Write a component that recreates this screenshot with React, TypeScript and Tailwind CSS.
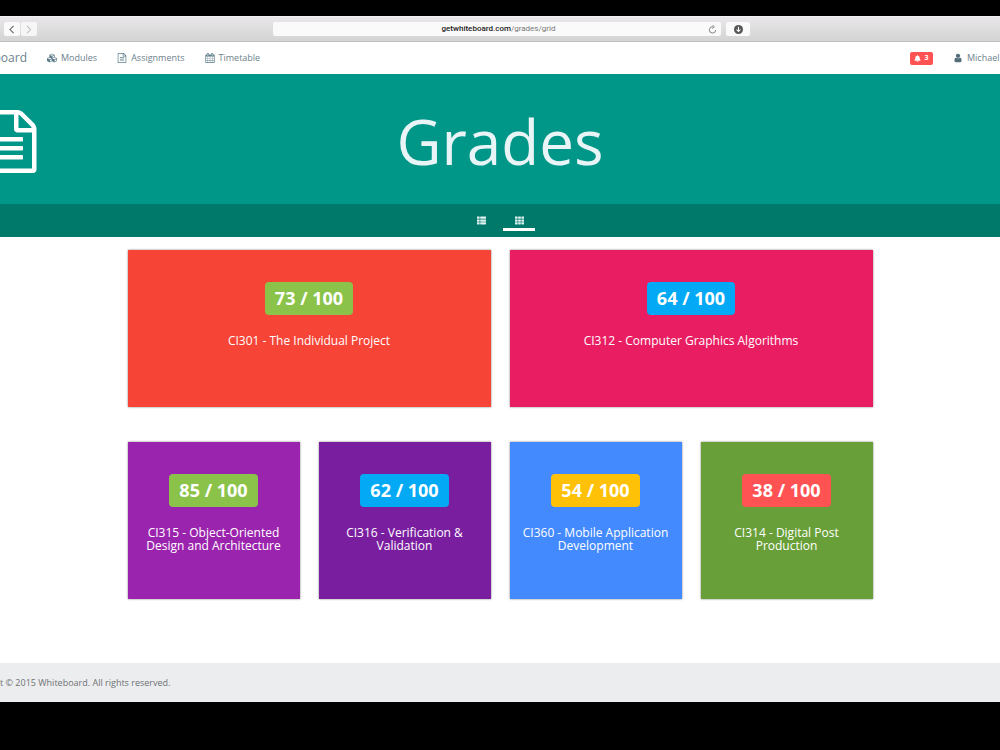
import React from "react";
import { FaBell, FaCubes, FaTh, FaThList } from "react-icons/fa";

type Grade = {
  title: string;
  score: number;
  wide?: boolean;
  cardClass: string;
  badgeClass: string;
};

const grades: Grade[] = [
  { title: "CI301 - The Individual Project", score: 73, wide: true, cardClass: "bg-[#f64436]", badgeClass: "bg-[#8bc34a]" },
  { title: "CI312 - Computer Graphics Algorithms", score: 64, wide: true, cardClass: "bg-[#e91e62]", badgeClass: "bg-[#03a9f4]" },
  { title: "CI315 - Object-Oriented Design and Architecture", score: 85, cardClass: "bg-[#9b24ae]", badgeClass: "bg-[#8bc34a]" },
  { title: "CI316 - Verification & Validation", score: 62, cardClass: "bg-[#7a1ea0]", badgeClass: "bg-[#03a9f4]" },
  { title: "CI360 - Mobile Application Development", score: 54, cardClass: "bg-[#448aff]", badgeClass: "bg-[#ffc107]" },
  { title: "CI314 - Digital Post Production", score: 38, cardClass: "bg-[#689f38]", badgeClass: "bg-[#ff5252]" },
];

export default function App() {
  return (
    <div className="flex min-h-screen flex-col bg-black pt-4 pb-12 font-['Open_Sans',sans-serif]">
      <BrowserBar />
      <div className="flex flex-1 flex-col bg-white">
        <NavBar />
        <Hero />
        <ViewTabs />
        <main className="mx-auto grid w-full max-w-[745px] flex-1 grid-cols-4 content-start gap-x-[19px] gap-y-[35px] pt-[13px]">
          {grades.map((grade) => (
            <GradeCard key={grade.title} {...grade} />
          ))}
        </main>
        <footer className="flex h-[39px] items-center bg-[#ecedef] text-[9px] text-[#6f7275]">
          t © 2015 Whiteboard. All rights reserved.
        </footer>
      </div>
    </div>
  );
}

function BrowserBar() {
  return (
    <div className="flex h-[26px] items-center border-t border-b border-t-[#f3f1f3] border-b-[#bfbfbf] bg-gradient-to-b from-[#e9e7e9] to-[#d4d4d4] pl-1 font-['Roboto',sans-serif]">
      <div className="flex gap-px">
        <button aria-label="Back" className="flex h-[14px] w-4 items-center justify-center rounded-xs bg-[#fafafa] text-[#5f5f5f]">
          <Chevron d="M7 1 2.500 5.500 7 10" />
        </button>
        <button aria-label="Forward" className="flex h-[14px] w-4 items-center justify-center rounded-xs bg-[#f6f6f6] text-[#bcbcbc]">
          <Chevron d="M2.500 1 7 5.500 2.500 10" />
        </button>
      </div>
      <div className="ml-[236px] flex h-[14px] flex-1 items-center rounded-xs bg-[#fafafa] pr-1">
        <button className="flex-1 pl-4 text-center text-[8px] leading-3 text-[#777]">
          <span className="font-medium text-[#1c1c1c]">getwhiteboard.com</span>/grades/grid
        </button>
        <button aria-label="Reload" className="text-[#777]">
          <svg viewBox="0 0 10 10" className="size-[9px]" fill="none" stroke="currentColor">
            <path d="M5.500 2A3.500 3.500 0 1 0 8.500 5.500" />
            <path d="M4.800 0 7 2 4.800 4" />
          </svg>
        </button>
      </div>
      <button aria-label="Downloads" className="mr-[250px] ml-[5px] flex h-[14px] w-6 items-center justify-center rounded-xs bg-[#fafafa]">
        <svg viewBox="0 0 10 10" className="size-[9px]">
          <circle cx="5" cy="5" r="5" fill="#555" />
          <path d="M5 2v5M2.800 5 5 7.300 7.200 5" fill="none" stroke="#fff" strokeWidth="1.200" />
        </svg>
      </button>
    </div>
  );
}

function Chevron({ d }: { d: string }) {
  return (
    <svg viewBox="0 0 10 11" className="h-[9px] w-2" fill="none" stroke="currentColor" strokeWidth="1.300">
      <path d={d} />
    </svg>
  );
}

function NavBar() {
  return (
    <nav className="flex h-8 items-center text-[9px] text-[#6d828c]">
      <a href="#home" className="flex w-[27px] justify-end overflow-hidden text-xs">
        board
      </a>
      <a href="#modules" className="ml-5 flex items-center gap-1">
        <FaCubes className="size-[10px] text-[#607d8b]" />
        Modules
      </a>
      <a href="#assignments" className="ml-5 flex items-center gap-1">
        <FileIcon className="size-[10px] text-[#607d8b]" />
        Assignments
      </a>
      <a href="#timetable" className="ml-5 flex items-center gap-1">
        <CalendarIcon className="size-[10px] text-[#607d8b]" />
        Timetable
      </a>
      <button className="ml-auto flex h-[13px] w-[23px] items-center justify-center gap-[3px] rounded-xs bg-[#ff5252] text-[7px] font-bold text-white">
        <FaBell className="size-[7px]" />3
      </button>
      <a href="#profile" className="ml-5 flex w-[47px] items-center gap-1">
        <UserIcon className="size-[10px] shrink-0 text-[#546e7a]" />
        Michael
      </a>
    </nav>
  );
}

function Hero() {
  return (
    <header className="relative flex h-[130px] items-center justify-center overflow-hidden bg-[#009688] pt-1">
      <FileIcon className="absolute top-9 -left-[22px] size-[63px] text-white" />
      <h1 className="text-[62px] leading-[72px] text-[#e8f4f5]">Grades</h1>
    </header>
  );
}

function ViewTabs() {
  return (
    <div className="flex h-[33px] justify-center gap-[6px] bg-[#00796b] pb-[6px] text-[#e0f2f1]">
      <button aria-label="List view" className="flex w-8 items-center justify-center border-b-3 border-transparent pt-2">
        <FaThList className="size-[9px]" />
      </button>
      <button aria-label="Grid view" className="flex w-8 items-center justify-center border-b-3 border-white pt-2">
        <FaTh className="size-[9px]" />
      </button>
    </div>
  );
}

function GradeCard({ title, score, wide, cardClass, badgeClass }: Grade) {
  return (
    <section
      className={`flex h-[157px] flex-col items-center px-3 pt-8 text-center text-white shadow-[0_0_2px_rgba(0,0,0,0.5)] ${cardClass} ${wide ? "col-span-2" : ""}`}
    >
      <div className={`flex h-[33px] items-center rounded-sm px-[10px] pb-[2px] text-lg font-bold ${badgeClass}`}>
        {score} / 100
      </div>
      <h2 className="mt-[19px] text-xs leading-[13px]">{title}</h2>
    </section>
  );
}

type IconProps = {
  className?: string;
};

function FileIcon({ className }: IconProps) {
  return (
    <svg viewBox="0 0 1792 1792" fill="currentColor" className={className}>
      <path d="M1596 380q28 28 48 76t20 88v1152q0 40-28 68t-68 28h-1344q-40 0-68-28t-28-68v-1600q0-40 28-68t68-28h896q40 0 88 20t76 48zm-444-244v376h376q-10-29-22-41l-313-313q-12-12-41-22zm384 1528v-1024h-416q-40 0-68-28t-28-68v-416h-768v1536h1280zm-1024-864q0-14 9-23t23-9h704q14 0 23 9t9 23v64q0 14-9 23t-23 9h-704q-14 0-23-9t-9-23v-64zm736 224q14 0 23 9t9 23v64q0 14-9 23t-23 9h-704q-14 0-23-9t-9-23v-64q0-14 9-23t23-9h704zm0 256q14 0 23 9t9 23v64q0 14-9 23t-23 9h-704q-14 0-23-9t-9-23v-64q0-14 9-23t23-9h704z" />
    </svg>
  );
}

function CalendarIcon({ className }: IconProps) {
  return (
    <svg viewBox="0 0 1792 1792" fill="currentColor" className={className}>
      <path d="M192 1664h288v-288h-288v288zm352 0h320v-288h-320v288zm-352-352h288v-320h-288v320zm352 0h320v-320h-320v320zm-352-384h288v-288h-288v288zm736 736h320v-288h-320v288zm-384-736h320v-288h-320v288zm768 736h288v-288h-288v288zm-384-352h320v-320h-320v320zm-352-864v-288q0-13-9.500-22.500t-22.500-9.500h-64q-13 0-22.500 9.500t-9.500 22.500v288q0 13 9.500 22.500t22.500 9.500h64q13 0 22.500-9.500t9.500-22.500zm736 864h288v-320h-288v320zm-384-384h320v-288h-320v288zm384 0h288v-288h-288v288zm32-480v-288q0-13-9.500-22.500t-22.500-9.500h-64q-13 0-22.500 9.500t-9.500 22.500v288q0 13 9.500 22.500t22.500 9.500h64q13 0 22.500-9.500t9.500-22.500zm384-64v1280q0 52-38 90t-90 38h-1408q-52 0-90-38t-38-90v-1280q0-52 38-90t90-38h128v-96q0-66 47-113t113-47h64q66 0 113 47t47 113v96h384v-96q0-66 47-113t113-47h64q66 0 113 47t47 113v96h128q52 0 90 38t38 90z" />
    </svg>
  );
}

function UserIcon({ className }: IconProps) {
  return (
    <svg viewBox="0 0 1792 1792" fill="currentColor" className={className}>
      <path d="M1536 1399q0 109-62.500 187t-150.500 78h-854q-88 0-150.500-78t-62.500-187q0-85 8.500-160.500t31.500-152 58.500-131 94-89 134.500-34.500q131 128 313 128t313-128q76 0 134.500 34.500t94 89 58.500 131 31.500 152 8.500 160.500zm-256-887q0 159-112.500 271.500t-271.500 112.500-271.500-112.500-112.500-271.500 112.500-271.500 271.500-112.500 271.500 112.500 112.500 271.500z" />
    </svg>
  );
}
